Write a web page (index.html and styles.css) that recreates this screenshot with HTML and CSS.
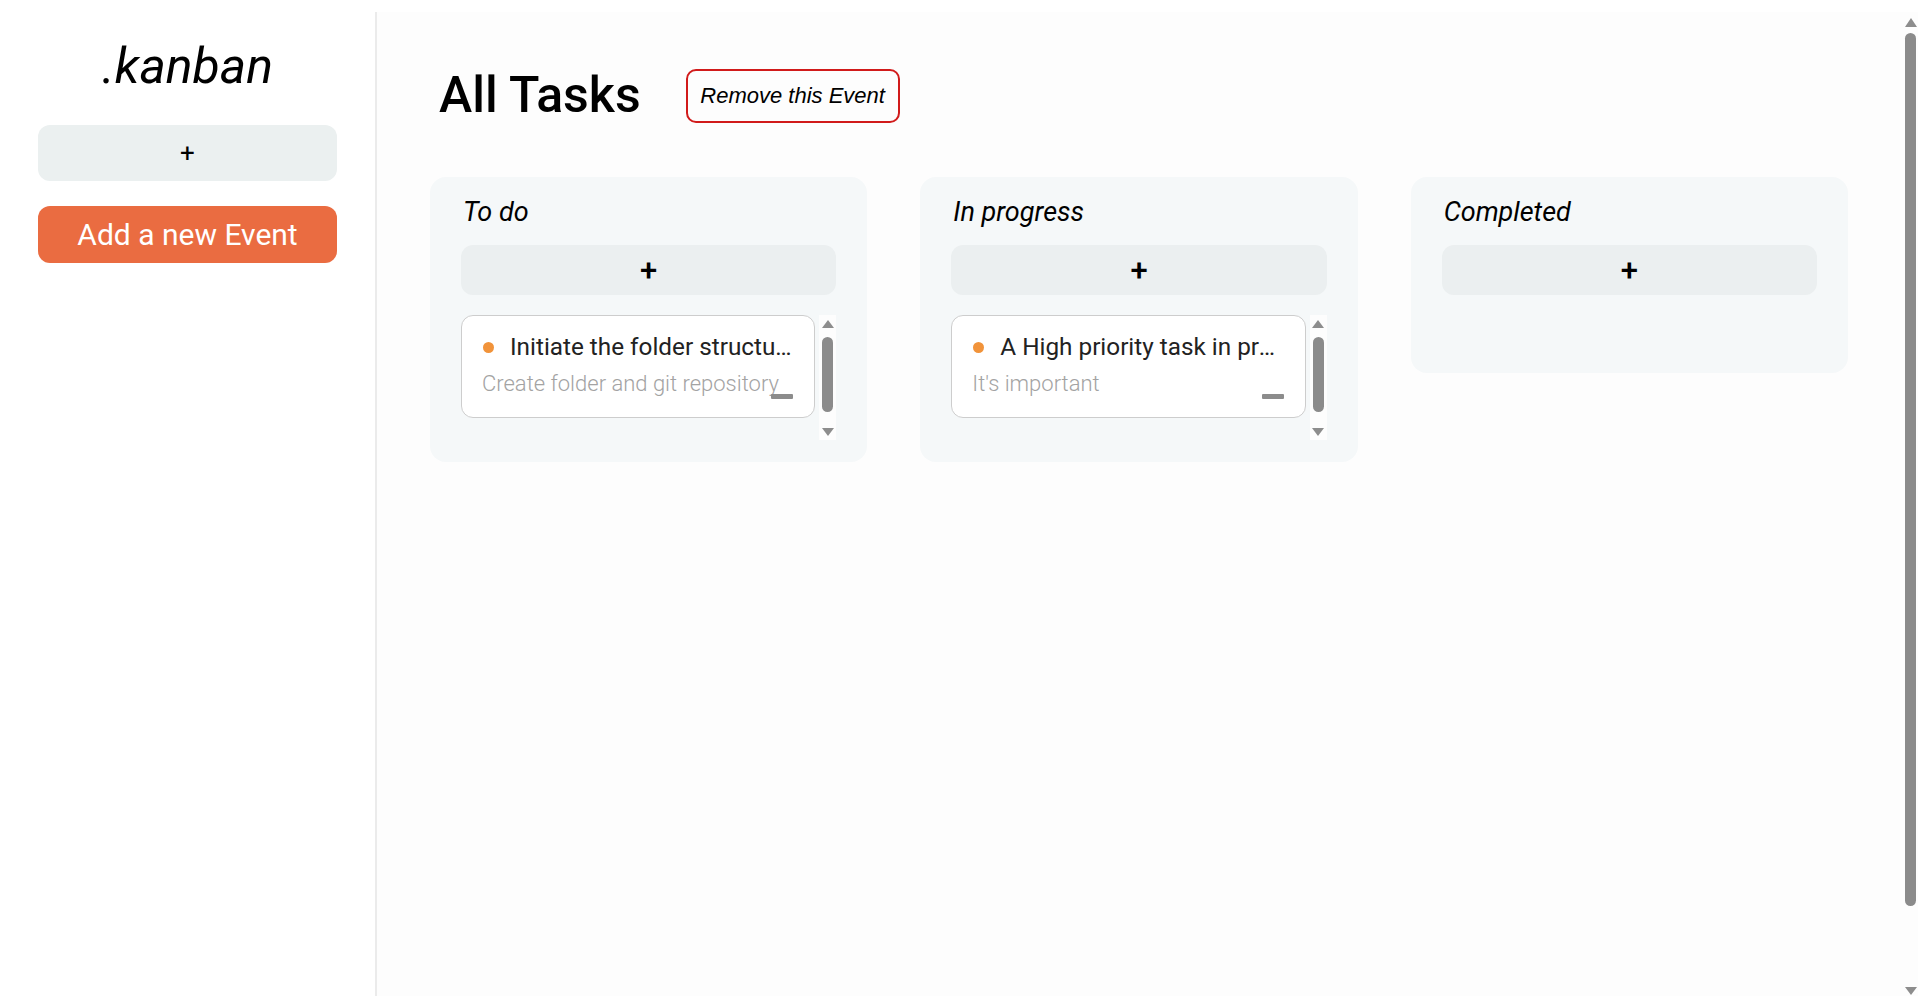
FILE: index.html
```html
<!DOCTYPE html>
<html lang="en">
<head>
<meta charset="utf-8">
<title>.kanban</title>
<link rel="stylesheet" href="styles.css">
</head>
<body>
<div class="layout">
  <aside class="sidebar">
    <h1 class="logo">.kanban</h1>
    <button class="side-add">+</button>
    <button class="new-event">Add a new Event</button>
  </aside>
  <main class="main">
    <header class="page-head">
      <h2 class="page-title">All Tasks</h2>
      <button class="remove-event">Remove this Event</button>
    </header>
    <section class="board">
      <div class="column">
        <h3 class="column-title">To do</h3>
        <button class="column-add">+</button>
        <div class="task-list">
          <div class="task-scroll">
            <div class="card">
              <div class="card-title"><span class="dot"></span><span class="card-title-text">Initiate the folder structure of the project</span></div>
              <div class="card-desc">Create folder and git repository</div>
              <span class="card-minus"></span>
            </div>
          </div>
          <div class="vscroll list-scroll">
            <div class="vs-btn vs-up"><span class="tri-up"></span></div>
            <div class="vs-track"><div class="vs-thumb"></div></div>
            <div class="vs-btn vs-down"><span class="tri-down"></span></div>
          </div>
        </div>
      </div>
      <div class="column">
        <h3 class="column-title">In progress</h3>
        <button class="column-add">+</button>
        <div class="task-list">
          <div class="task-scroll">
            <div class="card">
              <div class="card-title"><span class="dot"></span><span class="card-title-text">A High priority task in progress</span></div>
              <div class="card-desc">It's important</div>
              <span class="card-minus"></span>
            </div>
          </div>
          <div class="vscroll list-scroll">
            <div class="vs-btn vs-up"><span class="tri-up"></span></div>
            <div class="vs-track"><div class="vs-thumb"></div></div>
            <div class="vs-btn vs-down"><span class="tri-down"></span></div>
          </div>
        </div>
      </div>
      <div class="column">
        <h3 class="column-title">Completed</h3>
        <button class="column-add">+</button>
        <div class="task-list-empty"></div>
      </div>
    </section>
  </main>
  <div class="vscroll page-scroll">
    <div class="vs-btn vs-up"><span class="tri-up"></span></div>
    <div class="vs-track"><div class="vs-thumb"></div></div>
    <div class="vs-btn vs-down"><span class="tri-down"></span></div>
  </div>
</div>
</body>
</html>
```

FILE: styles.css
```css
* { box-sizing: border-box; }

html, body {
  margin: 0;
  height: 100%;
}

body {
  padding-top: 12px;
  background: #ffffff;
  overflow: hidden;
  font-family: Roboto, "Noto Sans", Arial, sans-serif;
  color: #000;
}

.layout {
  display: flex;
  height: 100%;
  background: #fdfdfd;
}

/* Sidebar */
.sidebar {
  width: 377px;
  flex: 0 0 377px;
  background: #ffffff;
  border-right: 2px solid #ebebeb;
  padding: 25px 38px 0 38px;
  display: flex;
  flex-direction: column;
}

.logo {
  margin: 0;
  font-size: 50px;
  font-weight: 400;
  font-style: italic;
  text-align: center;
  line-height: 58px;
}

.side-add {
  margin-top: 30px;
  height: 56px;
  border: none;
  border-radius: 12px;
  background: #ebf0f0;
  font-family: Roboto, sans-serif;
  font-size: 26px;
  color: #000;
  display: flex;
  align-items: center;
  justify-content: center;
}

.new-event {
  margin-top: 25px;
  height: 57px;
  border: none;
  border-radius: 12px;
  background: #ea6c41;
  color: #ffffff;
  font-family: Roboto, sans-serif;
  font-size: 30px;
  font-weight: 400;
  display: flex;
  align-items: center;
  justify-content: center;
}

/* Main */
.main {
  flex: 1;
  min-width: 0;
  padding: 0 53px;
  background: #fdfdfd;
}

.page-head {
  display: flex;
  align-items: center;
  gap: 45px;
  padding: 54px 0 0 9px;
  height: 113px;
}

.page-title {
  margin: 0;
  font-size: 50px;
  font-weight: 500;
  line-height: 59px;
}

.remove-event {
  width: 214px;
  height: 54px;
  border: 2px solid #d11b1b;
  border-radius: 10px;
  background: transparent;
  font-family: "Liberation Sans", Arial, sans-serif;
  font-style: italic;
  font-size: 22px;
  color: #000;
  padding: 0;
  margin-top: 1px;
}

.board {
  margin-top: 52px;
  display: grid;
  grid-template-columns: repeat(3, minmax(0, 1fr));
  gap: 53px;
  align-items: start;
}

.column {
  background: #f5f8f9;
  border-radius: 16px;
  padding: 19px 31px 22px 31px;
  display: flex;
  flex-direction: column;
}

.column-title {
  margin: 0 0 17px 2px;
  font-size: 27px;
  font-weight: 400;
  font-style: italic;
  line-height: 32px;
}

.column-add {
  height: 50px;
  border: none;
  border-radius: 12px;
  background: #ebeff0;
  font-family: Roboto, sans-serif;
  font-size: 31px;
  font-weight: 500;
  color: #000;
  display: flex;
  align-items: center;
  justify-content: center;
}

.task-list {
  margin-top: 20px;
  height: 125px;
  display: flex;
}

.task-list-empty {
  margin-top: 20px;
  height: 36px;
}

.task-scroll {
  flex: 1;
  min-width: 0;
  overflow: hidden;
}

.card {
  position: relative;
  background: #ffffff;
  border: 1px solid #cdcdcd;
  border-radius: 12px;
  margin-right: 4px;
  padding: 17px 20px 20px 20px;
}

.card-title {
  display: flex;
  align-items: center;
  font-size: 24.3px;
  font-weight: 400;
  line-height: 28px;
  color: #222222;
}

.dot {
  flex: 0 0 11px;
  width: 11px;
  height: 11px;
  border-radius: 50%;
  background: #f1933a;
  margin: 0 16px 0 1px;
}

.card-title-text {
  flex: 1;
  min-width: 0;
  white-space: nowrap;
  overflow: hidden;
  text-overflow: ellipsis;
}

.card-desc {
  margin-top: 10px;
  font-size: 22px;
  font-weight: 300;
  line-height: 26px;
  color: #a3a3a3;
  white-space: nowrap;
  overflow: hidden;
}

.card-minus {
  position: absolute;
  right: 21px;
  bottom: 18px;
  width: 22px;
  height: 5px;
  border-radius: 1px;
  background: #8c8c8c;
}

/* Scrollbars (drawn) */
.vscroll {
  flex: 0 0 17px;
  width: 17px;
  display: flex;
  flex-direction: column;
}

.list-scroll {
  background: #fdfdfd;
}

.page-scroll {
  background: #fdfdfd;
  padding-left: 2px;
}

.vs-btn {
  flex: 0 0 auto;
  display: flex;
  justify-content: center;
  align-items: center;
}

.list-scroll .vs-btn {
  height: 17px;
}

.page-scroll .vs-up {
  height: 21px;
}

.page-scroll .vs-down {
  height: 17px;
  align-items: flex-end;
  padding-bottom: 1px;
}

.tri-up,
.tri-down {
  width: 0;
  height: 0;
  border-left: 6px solid transparent;
  border-right: 6px solid transparent;
}

.tri-up {
  border-bottom: 8px solid #8d8d8d;
}

.tri-down {
  border-top: 8px solid #8d8d8d;
}

.page-scroll .tri-up {
  border-bottom-width: 9px;
}

.page-scroll .tri-down {
  border-top-width: 8px;
}

.vs-track {
  flex: 1;
  display: flex;
  flex-direction: column;
  align-items: center;
}

.vs-thumb {
  width: 11px;
  border-radius: 6px;
  background: #8b8b8b;
}

.list-scroll .vs-thumb {
  margin-top: 5px;
  height: 75px;
}

.page-scroll .vs-thumb {
  height: 873px;
}
```
